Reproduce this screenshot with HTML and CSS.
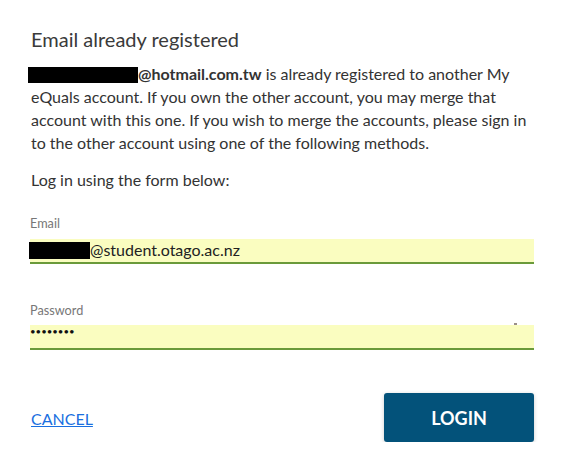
FILE: index.html
```html
<!DOCTYPE html>
<html>
<head>
<meta charset="utf-8">
<link rel="stylesheet" href="styles.css">
</head>
<body>
<div class="dialog">
  <h1 class="title">Email already registered</h1>
  <p class="msg"><span class="redact redact-1"></span><strong>@hotmail.com.tw</strong> is already registered to another My eQuals account. If you own the other account, you may merge that account with this one. If you wish to merge the accounts, please sign in to the other account using one of the following methods.</p>
  <p class="lead">Log in using the form below:</p>
  <div class="field">
    <label class="label">Email</label>
    <div class="input"><span class="redact redact-2"></span>@student.otago.ac.nz</div>
  </div>
  <div class="field field-pw">
    <label class="label">Password</label>
    <div class="input input-pw">••••••••<span class="mark"></span></div>
  </div>
  <div class="actions">
    <a class="cancel" href="#">CANCEL</a>
    <button class="login">LOGIN</button>
  </div>
</div>
</body>
</html>
```
FILE: styles.css
```css
html, body {
  margin: 0;
  padding: 0;
  background: #ffffff;
}
body {
  font-family: Lato, "Open Sans", sans-serif;
  color: #333333;
}
.dialog {
  width: 503px;
  padding: 26px 28px 0 31px;
}
.title {
  margin: 0;
  font-size: 20px;
  font-weight: 400;
  line-height: 26px;
  color: #3a3a3a;
}
.msg {
  margin: 10px 0 0;
  font-size: 16px;
  line-height: 23px;
  color: #333;
}
.msg strong {
  font-weight: 700;
  color: #333;
}
.redact {
  display: inline-block;
  background: #000;
}
.redact-1 {
  width: 110px;
  height: 16px;
  margin-left: -3px;
  vertical-align: -3px;
}
.lead {
  margin: 14px 0 0;
  font-size: 16px;
  line-height: 24px;
  color: #333;
}
.field {
  margin-top: 24px;
  margin-left: -1px;
}
.label {
  display: block;
  font-size: 12.7px;
  line-height: 14px;
  color: #777;
}
.input {
  margin-top: 9px;
  height: 23px;
  background: #fafdc0;
  border-bottom: 2px solid #6a9a3a;
  font-size: 16px;
  line-height: 22px;
  color: #222;
  position: relative;
}
.redact-2 {
  width: 61px;
  height: 17px;
  margin-left: -1px;
  vertical-align: -3px;
}
.field-pw {
  margin-top: 39px;
}
.input-pw {
  margin-top: 8px;
  font-size: 9.6px;
  line-height: 14px;
  color: #111;
}
.mark {
  position: absolute;
  right: 17px;
  top: -2px;
  width: 3px;
  height: 2px;
  background: #9a8f8a;
}
.actions {
  margin-top: 43px;
  display: flex;
  align-items: center;
  justify-content: space-between;
}
.cancel {
  font-size: 16px;
  color: #1a6fe0;
  text-decoration: underline;
  margin-top: 1px;
}
.login {
  width: 150px;
  height: 49px;
  border: none;
  border-radius: 3px;
  background: #03527a;
  color: #ffffff;
  font-family: Lato, sans-serif;
  font-weight: 700;
  font-size: 18px;
  box-shadow: 0 1px 4px rgba(0,0,0,0.2);
  padding: 0;
}
```
